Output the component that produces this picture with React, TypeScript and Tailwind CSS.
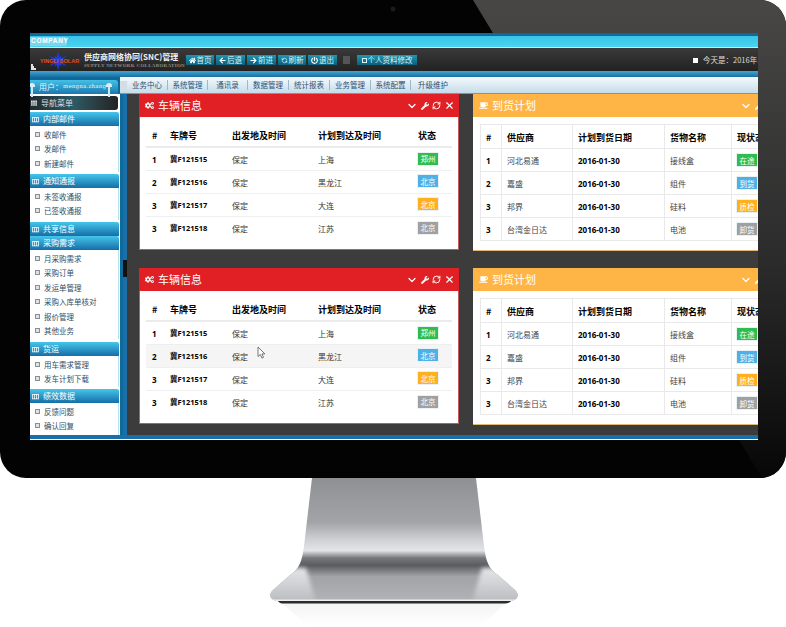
import { ChevronDown, RefreshCw, X } from "lucide-react";
import {
  FaArrowLeft,
  FaArrowRight,
  FaCoffee,
  FaCogs,
  FaHome,
  FaPowerOff,
  FaTh,
  FaWrench,
} from "react-icons/fa";
import { MdOutlineViewColumn } from "react-icons/md";
import { TbRefresh } from "react-icons/tb";

const cjk = "font-['Noto_Sans_CJK_SC','Noto_Sans',sans-serif]";

const navItems = [
  { label: "业务中心", w: "w-[36px] justify-start" },
  { label: "系统管理", w: "w-[40px] justify-center" },
  { label: "通讯录", w: "w-[40px] justify-center" },
  { label: "数据管理", w: "w-[41px] justify-center" },
  { label: "统计报表", w: "w-[41px] justify-center" },
  { label: "业务管理", w: "w-[41px] justify-center" },
  { label: "系统配置", w: "w-[40px] justify-center" },
  { label: "升级维护", w: "w-[44px] justify-center" },
];

const topButtons = [
  { label: "首页", icon: <FaHome />, w: "w-[28px]" },
  { label: "后退", icon: <FaArrowLeft />, w: "w-[29px]" },
  { label: "前进", icon: <FaArrowRight />, w: "w-[29px]" },
  { label: "刷新", icon: <TbRefresh />, w: "w-[28px]" },
  { label: "退出", icon: <FaPowerOff />, w: "w-[29px]" },
];

const badgeColors: Record<string, string> = {
  green: "bg-[#2ebd4e]",
  blue: "bg-[#4fb0e6]",
  orange: "bg-[#ffb020]",
  gray: "bg-[#a0a0a0]",
};

const vehicles = [
  { id: "1", plate: "冀F121515", from: "保定", to: "上海", tag: "郑州", color: "green" },
  { id: "2", plate: "冀F121516", from: "保定", to: "黑龙江", tag: "北京", color: "blue" },
  { id: "3", plate: "冀F121517", from: "保定", to: "大连", tag: "北京", color: "orange" },
  { id: "3", plate: "冀F121518", from: "保定", to: "江苏", tag: "北京", color: "gray" },
];

const arrivals = [
  { id: "1", vendor: "河北易通", date: "2016-01-30", goods: "接线盒", tag: "在途", color: "green" },
  { id: "2", vendor: "嘉盛", date: "2016-01-30", goods: "组件", tag: "到货", color: "blue" },
  { id: "3", vendor: "邦界", date: "2016-01-30", goods: "硅料", tag: "质检", color: "orange" },
  { id: "3", vendor: "台湾金日达", date: "2016-01-30", goods: "电池", tag: "卸货", color: "gray" },
];

const menu = [
  { title: "内部邮件", items: ["收邮件", "发邮件", "新建邮件"], h: "h-[46px]", gap: "mb-[2px]" },
  { title: "通知通报", items: ["未签收通报", "已签收通报"], h: "h-[32px]", gap: "mb-[2px]" },
  { title: "共享信息", items: [], h: "h-0", gap: "" },
  { title: "采购需求", items: ["月采购需求", "采购订单", "发运单管理", "采购入库单核对", "报价管理", "其他业务"], h: "h-[89px]", gap: "mb-[3px]" },
  { title: "货运", items: ["用车需求管理", "发车计划下载"], h: "h-[31px]", gap: "mb-[2px]" },
  { title: "绩效数据", items: ["反馈问题", "确认回复"], h: "h-[32px]", gap: "" },
];

function Badge({ text, color }: { text: string; color: string }) {
  return (
    <span className={`inline-flex h-[12px] w-[20px] items-center justify-center text-[7.5px] leading-none text-white outline outline-1 outline-[#e8f2f5] ${badgeColors[color]}`}>
      {text}
    </span>
  );
}

function PanelHead({ title, icon, bg }: { title: string; icon: React.ReactNode; bg: string }) {
  return (
    <div className={`flex h-[23px] items-center pl-[6px] pr-[4px] text-white ${bg}`}>
      <span className="mr-[4px] text-[9px]">{icon}</span>
      <span className="text-[11px] leading-none">{title}</span>
      <div className="ml-auto flex items-center gap-[3px]">
        <ChevronDown size={12} strokeWidth={2.4} />
        <FaWrench size={8} />
        <RefreshCw size={9} strokeWidth={2.6} />
        <X size={11} strokeWidth={2.4} />
      </div>
    </div>
  );
}

function VehiclePanel({ hoverRow }: { hoverRow?: number }) {
  return (
    <div className="h-[156px] w-[320px] shrink-0 border border-[#c05a5a] bg-white">
      <PanelHead title="车辆信息" icon={<FaCogs />} bg="bg-[#e02024] -mx-px -mt-px" />
      <div className="px-[6px] pt-[8px]">
        <table className="w-[306px] table-fixed border-collapse text-left text-[8px] text-[#333]">
          <colgroup>
            <col className="w-[18px]" />
            <col className="w-[62px]" />
            <col className="w-[86px]" />
            <col className="w-[100px]" />
            <col className="w-[40px]" />
          </colgroup>
          <thead>
            <tr className="h-[22px] border-b-2 border-[#ebebeb] text-[9px] text-black">
              <th className="pl-[6px] font-bold">#</th>
              <th className="pl-[6px] font-bold">车牌号</th>
              <th className="pl-[6px] font-bold">出发地及时间</th>
              <th className="pl-[6px] font-bold">计划到达及时间</th>
              <th className="pl-[6px] font-bold">状态</th>
            </tr>
          </thead>
          <tbody>
            {vehicles.map((v, i) => (
              <tr key={v.plate} className={`h-[23px] border-[#efefef] ${i < 3 ? "border-b" : ""} ${hoverRow === i ? "bg-[#f5f5f5]" : ""}`}>
                <td className="pl-[6px] pt-[2px] font-['Open_Sans',sans-serif] font-bold text-black">{v.id}</td>
                <td className="pl-[6px] pt-[2px] font-['Open_Sans','Noto_Sans_CJK_SC',sans-serif] text-[7.5px] font-bold text-black">{v.plate}</td>
                <td className="pl-[6px] pt-[2px]">{v.from}</td>
                <td className="pl-[6px] pt-[2px]">{v.to}</td>
                <td className="pl-[6px]"><Badge text={v.tag} color={v.color} /></td>
              </tr>
            ))}
          </tbody>
        </table>
      </div>
    </div>
  );
}

function ArrivalPanel() {
  return (
    <div className="h-[157px] w-[320px] shrink-0 border-b border-[#e0b878] bg-white">
      <PanelHead title="到货计划" icon={<FaCoffee />} bg="bg-[#ffb546]" />
      <div className="px-[7px] pt-[7px]">
        <table className="w-[306px] table-fixed border-collapse text-left text-[8px] text-[#444]">
          <colgroup>
            <col className="w-[21px]" />
            <col className="w-[71px]" />
            <col className="w-[92px]" />
            <col className="w-[67px]" />
            <col className="w-[55px]" />
          </colgroup>
          <thead>
            <tr className="h-[24px] text-[9px] text-black">
              {["#", "供应商", "计划到货日期", "货物名称", "现状态"].map((h) => (
                <th key={h} className="whitespace-nowrap border border-[#e9e9e9] pl-[5px] pt-[2px] font-bold">{h}</th>
              ))}
            </tr>
          </thead>
          <tbody>
            {arrivals.map((a) => (
              <tr key={a.vendor} className="h-[23px]">
                <td className="border border-[#e9e9e9] pl-[5px] pt-[2px] font-['Open_Sans',sans-serif] font-bold text-black">{a.id}</td>
                <td className="border border-[#e9e9e9] pl-[5px] pt-[2px]">{a.vendor}</td>
                <td className="border border-[#e9e9e9] pl-[5px] pt-[2px] font-['Open_Sans',sans-serif] font-bold text-black">{a.date}</td>
                <td className="border border-[#e9e9e9] pl-[5px] pt-[2px]">{a.goods}</td>
                <td className="border border-[#e9e9e9] pl-[5px] pt-[1px]"><Badge text={a.tag} color={a.color} /></td>
              </tr>
            ))}
          </tbody>
        </table>
      </div>
    </div>
  );
}

function Logo() {
  const rays = [0, 30, 60, 90, 120, 150, 180, 210, 240, 270, 300, 330];
  return (
    <div className="relative h-full w-[54px] shrink-0">
      <svg viewBox="0 0 54 23" className="h-[23px] w-[54px]">
        {rays.map((r, i) => (
          <polygon key={r} points={`28,${i % 2 ? 6 : 2.5} 29.8,13 26.2,13`} fill="#1d3fe0" transform={`rotate(${r} 28 13)`} />
        ))}
        <circle cx="28" cy="13" r="4" fill="#1d3fe0" />
        <path d="M1 22h5v-2H4v-2H3v-2H1z" fill="#dfe3e6" />
      </svg>
      <span className="absolute left-[10px] top-[10px] whitespace-nowrap font-['Liberation_Sans',sans-serif] text-[5.5px] font-bold leading-[6px] text-[#e2501c]">
        YINGLI SOLAR
      </span>
    </div>
  );
}

function Pin({ left }: { left: string }) {
  return (
    <span className={`absolute top-[3px] flex flex-col items-center ${left}`}>
      <span className="h-[4px] w-[6px] rounded-t-full bg-[#dcecf5]" />
      <span className="h-[10px] w-[2px] bg-[#cfe9f7]" />
    </span>
  );
}

function Sidebar() {
  return (
    <div className="w-[90px] shrink-0 bg-[#0f6a9c] pt-[3px]">
      <div className="relative mr-[2px] flex h-[14px] items-center rounded-tr-[3px] bg-gradient-to-b from-[#45c1e6] to-[#1a78ae] pl-[9px] text-[8px] leading-none text-[#e6f7fb]">
        用户：<span className="font-['DejaVu_Serif',serif] text-[5.5px] tracking-[0.2px]">mengna.zhang</span>
        <Pin left="-left-[1px]" />
        <Pin left="left-[76px]" />
      </div>
      <div className="bg-white pb-0 pt-[2px]">
        <div className="mr-[2px] flex h-[14px] items-center rounded-r-[3px] bg-gradient-to-r from-[#1e2a2e] via-[#2c5a66] to-[#232323] pl-[1px] text-[8px] leading-none text-[#d5dde0]">
          <FaTh size={6} className="mr-[4px] text-[#e6e6e6]" />
          导航菜单
        </div>
      </div>
      <div className="h-[2px] bg-white" />
      <div className="flex h-[323px] flex-col bg-white">
        {menu.map((s) => (
          <div key={s.title} className={s.gap}>
            <div className="mr-[1px] flex h-[14px] items-center rounded-tr-[2px] bg-gradient-to-b from-[#46c6ea] to-[#156ea8] pl-[1px] text-[8px] leading-none text-white">
              <MdOutlineViewColumn size={9} className="mr-[3px] text-white" />
              {s.title}
            </div>
            {s.items.length > 0 && (
              <div className={`mr-[1px] border-r border-[#b5e4ee] pt-px ${s.h}`}>
                {s.items.map((item) => (
                  <div key={item} className="flex h-[14.5px] items-center pl-[5px] text-[7.5px] leading-none text-[#2f4d63]">
                    <span className="mr-[4px] h-[5px] w-[5px] border border-[#8a8f92] bg-[#dfe2e4]" />
                    {item}
                  </div>
                ))}
              </div>
            )}
          </div>
        ))}
      </div>
    </div>
  );
}

function Screen() {
  return (
    <div className={`relative z-10 flex h-[407px] w-[728px] flex-col overflow-hidden bg-white ${cjk}`}>
      <div className="h-[3px] bg-[#0f6a9c]" />
      <div className="h-[12px] border-b border-[#c6eef7] bg-gradient-to-b from-[#38c3e6] to-[#4bd4f2] pt-px">
        <span className="flex h-[9px] w-[37px] items-center rounded-r-[2px] bg-[#7ed6ec] pl-px font-['Liberation_Sans',sans-serif] text-[6.5px] font-bold leading-none tracking-[0.7px] text-white">
          COMPANY
        </span>
      </div>
      <div className="flex h-[23px] items-center bg-gradient-to-b from-[#3a3a3a] to-[#222]">
        <Logo />
        <div className="w-[102px] shrink-0">
          <div className="whitespace-nowrap text-[8px] font-bold leading-[12px] text-[#f0f0f0]">供应商网络协同(SNC)管理</div>
          <div className="whitespace-nowrap font-['Liberation_Serif',serif] text-[5px] font-bold leading-[6px] tracking-[0.3px] text-[#8d8d8d]">
            SUPPLY NETWORK COLLABORATION
          </div>
        </div>
        <div className="mt-[1px] flex items-center gap-[2px]">
          {topButtons.map((b) => (
            <div key={b.label} className={`flex h-[10px] items-center justify-center gap-px bg-gradient-to-b from-[#1d97b4] to-[#0c5f7c] text-[7.5px] leading-none text-[#d6f2f7] ${b.w}`}>
              <span className="text-[7px] text-white">{b.icon}</span>
              {b.label}
            </div>
          ))}
          <span className="ml-[4px] h-[8px] w-[7px] bg-[#555]" />
          <div className="ml-[5px] flex h-[10px] w-[60px] items-center justify-center gap-px bg-gradient-to-b from-[#1d97b4] to-[#0c5f7c] text-[7.5px] leading-none text-[#d6f2f7]">
            <span className="h-[5px] w-[5px] border border-[#d6f2f7]" />
            个人资料修改
          </div>
        </div>
        <div className="ml-[276px] mt-[1px] flex shrink-0 items-center whitespace-nowrap text-[7.5px] leading-none text-[#ddd]">
          <span className="mr-[5px] h-[5px] w-[5px] bg-white" />
          今天是：2016年1月30日
        </div>
      </div>
      <div className="h-[6px] bg-gradient-to-b from-[#3fa8d2] to-[#1b6ea2]" />
      <div className="flex h-[358px]">
        <Sidebar />
        <div className="flex w-[638px] flex-col">
          <div className="flex h-[17px] items-center border-b border-[#6f9db0] bg-gradient-to-b from-[#f4fafd] to-[#c6dcea] text-[7.5px] leading-none text-[#2c5070]">
            <span className="mr-[5px] h-[9px] w-[7px] bg-[#d3dde3]" />
            {navItems.map((n, i) => (
              <span key={n.label} className={`flex h-[10px] items-center ${n.w} ${i < navItems.length - 1 ? "border-r border-[#9fb8c8]" : ""}`}>
                {n.label}
              </span>
            ))}
          </div>
          <div className="relative flex h-[341px]">
            <div className="w-[7px] shrink-0 border-l-[3px] border-[#0f6a9c] bg-[#1a6fa8]" />
            <span className="absolute left-[3px] top-[166px] h-[17px] w-[4px] bg-[#111]" />
            <div className="flex flex-1 flex-col gap-[18px] bg-[#3c3c3c] pl-[12px]">
              <div className="flex h-[156px] gap-[14px]">
                <VehiclePanel />
                <ArrivalPanel />
              </div>
              <div className="flex h-[156px] gap-[14px]">
                <VehiclePanel hoverRow={1} />
                <ArrivalPanel />
              </div>
            </div>
            <svg viewBox="0 0 9 13" className="absolute left-[137px] top-[252px] h-[13px] w-[9px]">
              <path d="M1 1l0 9.5 2.3-2 1.6 3.6 1.6-.7-1.6-3.5h3z" fill="#fff" stroke="#555" strokeWidth="0.8" />
            </svg>
          </div>
        </div>
      </div>
      <div className="h-[4px] bg-[#1a6fa8]" />
      <div className="h-px bg-white" />
    </div>
  );
}

function Stand() {
  const body = "M312 0L476 0L484 68C486 84 489 91 498 97L515 112C520 116 518 123 510 123L278 123C270 123 268 116 273 112L290 97C299 91 302 84 304 68Z";
  return (
    <svg viewBox="0 0 786 149" className="block h-[149px] w-[786px]">
      <defs>
        <linearGradient id="metal" x1="0" y1="0" x2="0" y2="1">
          <stop offset="0" stopColor="#8f9094" />
          <stop offset="0.36" stopColor="#a3a4a7" />
          <stop offset="0.5" stopColor="#cfd0d3" />
          <stop offset="0.59" stopColor="#e3e4e6" />
          <stop offset="0.65" stopColor="#77787b" />
          <stop offset="0.71" stopColor="#5a5b5e" />
          <stop offset="0.8" stopColor="#a2a3a6" />
          <stop offset="1" stopColor="#b2b3b6" />
        </linearGradient>
        <linearGradient id="side" x1="0" y1="0" x2="0" y2="1">
          <stop offset="0" stopColor="#e4e6e8" />
          <stop offset="1" stopColor="#b9babe" />
        </linearGradient>
        <linearGradient id="floor" x1="0" y1="0" x2="0" y2="1">
          <stop offset="0" stopColor="#f4f4f4" />
          <stop offset="1" stopColor="#ffffff" />
        </linearGradient>
        <filter id="soft" x="-20%" y="-20%" width="140%" height="140%">
          <feGaussianBlur stdDeviation="2" />
        </filter>
        <clipPath id="foot">
          <path d={body} />
        </clipPath>
      </defs>
      <polygon points="282,125 506,125 482,147 306,147" fill="url(#floor)" />
      <path d="M277 122C279 125 281 125.500 284 125.500L504 125.500C507 125.500 510 125 512 122Z" fill="#2c2c2e" />
      <path d={body} fill="url(#metal)" />
      <g clipPath="url(#foot)">
        <polygon points="260,90 306,90 316,125 260,125" fill="url(#side)" filter="url(#soft)" />
        <polygon points="528,90 482,90 472,125 528,125" fill="url(#side)" filter="url(#soft)" />
        <rect x="260" y="121.500" width="270" height="1.500" fill="#eceded" />
      </g>
    </svg>
  );
}

export default function App() {
  return (
    <div className="h-[627px] w-[786px] overflow-hidden bg-white">
      <div className="relative h-[478px] w-[786px] overflow-hidden rounded-[26px] bg-[#030303] pl-[30px] pt-[33px]">
        <svg viewBox="0 0 786 478" className="absolute inset-0 h-[478px] w-[786px]">
          <defs>
            <linearGradient id="glare" x1="0" y1="0" x2="0" y2="1">
              <stop offset="0" stopColor="#484746" />
              <stop offset="0.55" stopColor="#2b2b2b" />
              <stop offset="1" stopColor="#070707" />
            </linearGradient>
          </defs>
          <polygon points="473,0 786,0 786,478 762,478" fill="url(#glare)" />
          <circle cx="393" cy="9" r="2.5" fill="#1b1b1b" />
        </svg>
        <Screen />
      </div>
      <Stand />
    </div>
  );
}
